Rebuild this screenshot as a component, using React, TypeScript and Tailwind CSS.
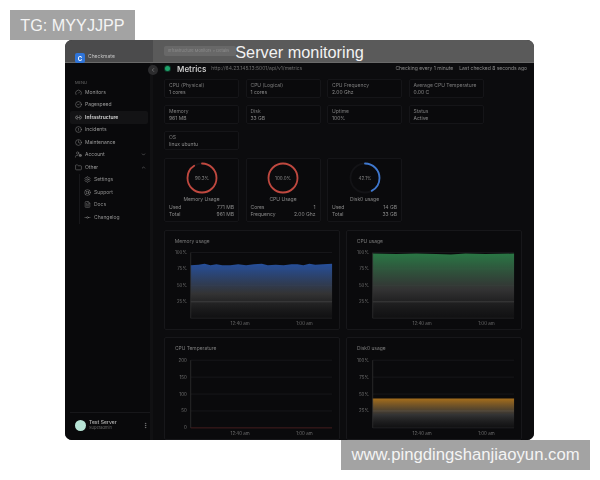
import React from 'react';
import {
  Gauge,
  CircleCheck,
  Link2,
  CircleAlert,
  Clock,
  UserCog,
  Folder,
  Settings,
  LifeBuoy,
  FileText,
  GitCommitHorizontal,
  ChevronDown,
  ChevronUp,
  ChevronLeft,
  MoreVertical,
} from 'lucide-react';

const navItems = [
  { label: 'Monitors', icon: Gauge },
  { label: 'Pagespeed', icon: CircleCheck },
  { label: 'Infrastructure', icon: Link2, active: true },
  { label: 'Incidents', icon: CircleAlert },
  { label: 'Maintenance', icon: Clock },
  { label: 'Account', icon: UserCog, chevron: 'down' },
  { label: 'Other', icon: Folder, chevron: 'up' },
];

const subItems = [
  { label: 'Settings', icon: Settings },
  { label: 'Support', icon: LifeBuoy },
  { label: 'Docs', icon: FileText },
  { label: 'Changelog', icon: GitCommitHorizontal },
];

const stats = [
  ['CPU (Physical)', '1 cores'],
  ['CPU (Logical)', '1 cores'],
  ['CPU Frequency', '2.00 Ghz'],
  ['Average CPU Temperature', '0.00 C'],
  ['Memory', '961 MB'],
  ['Disk', '33 GB'],
  ['Uptime', '100%'],
  ['Status', 'Active'],
  ['OS', 'linux ubuntu'],
];

const gauges = [
  { pct: 90.3, label: '90.3%', title: 'Memory Usage', color: '#c0483f', rows: [['Used', '771 MB'], ['Total', '961 MB']] },
  { pct: 100, label: '100.0%', title: 'CPU Usage', color: '#c0483f', rows: [['Cores', '1'], ['Frequency', '2.00 Ghz']] },
  { pct: 42.1, label: '42.1%', title: 'Disk0 usage', color: '#3f78cf', rows: [['Used', '14 GB'], ['Total', '33 GB']] },
];

const percentTicks = ['100%', '75%', '50%', '25%'];
const tempTicks = ['200', '150', '100', '50', '0'];

function Ring({ pct, label, color }: { pct: number; label: string; color: string }) {
  const r = 14.5;
  const c = 2 * Math.PI * r;
  return (
    <svg width="34" height="34" viewBox="0 0 34 34">
      <circle cx="17" cy="17" r={r} fill="none" stroke="#131316" strokeWidth="1.8" />
      <circle
        cx="17"
        cy="17"
        r={r}
        fill="none"
        stroke={color}
        strokeWidth="1.8"
        strokeLinecap="round"
        strokeDasharray={`${(c * pct) / 100} ${c}`}
        transform="rotate(-90 17 17)"
      />
      <text x="17" y="18.8" textAnchor="middle" fontSize="4.5" fill="#8a8a8a">
        {label}
      </text>
    </svg>
  );
}

// area chart drawn on the card's own coordinates
function Chart({
  id,
  title,
  ticks,
  color,
  line,
  fillTop,
}: {
  id: string;
  title: string;
  ticks: string[];
  color?: string;
  line?: string;
  fillTop?: number;
}) {
  const left = 26;
  const right = 169;
  const top = 22;
  const bottom = 89;
  const step = (bottom - top) / 4;
  return (
    <div className="border border-[#17171a] bg-[#0a0a0c] rounded-[2px] h-full">
      <svg width="100%" height="100%" viewBox="0 0 176 100" preserveAspectRatio="none">
        <defs>
          <linearGradient id={id} x1="0" y1="0" x2="0" y2="1">
            <stop offset="0" stopColor={color} stopOpacity="0.85" />
            <stop offset="0.55" stopColor="#454545" stopOpacity="0.7" />
            <stop offset="1" stopColor="#2a2a2a" stopOpacity="0.2" />
          </linearGradient>
        </defs>
        <text x="10" y="12" fontSize="5" fill="#7d7d7d">
          {title}
        </text>
        {[0, 1, 2, 3].map((i) => (
          <line key={i} x1={left} x2={right} y1={top + i * step} y2={top + i * step} stroke="#202024" strokeWidth="0.6" />
        ))}
        {color && fillTop !== undefined && (
          <path d={line ?? `M${left} ${fillTop}H${right}V${bottom}H${left}Z`} fill={`url(#${id})`} />
        )}
        {color && fillTop !== undefined && (
          <line x1={left} x2={right} y1={top + 3 * step} y2={top + 3 * step} stroke="#6a6a6a" strokeWidth="0.5" opacity="0.6" />
        )}
        <line x1={left} x2={left} y1={top} y2={bottom} stroke="#3c3c3c" strokeWidth="0.6" />
        <line x1={left} x2={right} y1={bottom} y2={bottom} stroke={ticks.length === 5 ? '#6b2a2a' : '#2a2a2e'} strokeWidth="0.6" />
        {ticks.map((t, i) => (
          <text key={t} x={left - 4} y={top + i * step + 1.5} textAnchor="end" fontSize="4.5" fill="#6f6f6f">
            {t}
          </text>
        ))}
        <text x="76" y="96" textAnchor="middle" fontSize="4.5" fill="#6f6f6f">
          12:40 am
        </text>
        <text x="141" y="96" textAnchor="middle" fontSize="4.5" fill="#6f6f6f">
          1:00 am
        </text>
      </svg>
    </div>
  );
}

const memoryPath =
  'M26 35L34 34.5L40 33.5L46 35L52 34L58 35L66 35L74 34L82 35L90 34L98 33.5L104 35L112 34.5L120 35L128 34L134 34L140 35L146 33.5L152 34.5L160 34L169 33.5V89H26Z';
const cpuPath = 'M26 23L50 23.5L70 23L90 23.5L105 24L120 23L140 23.5L169 23V89H26Z';

export default function App() {
  return (
    <div className="relative w-[600px] h-[480px] bg-white pt-10 pl-[65px] overflow-hidden font-['Inter',sans-serif]">
      <div className="relative w-[469px] h-[400px] rounded-[7px] overflow-hidden bg-[#0b0b0d] flex flex-col">
        {/* top bar */}
        <div className="h-[23px] shrink-0 flex bg-[#5a5a5a] border-b border-[#6a6a6a] blur-[0.4px]">
          <div className="w-[88px] flex items-end pl-[10px] gap-[3px] bg-[#4b4b4c]">
            <div className="w-[10px] h-[10px] mb-[-1px] rounded-[2px] bg-[#2f74d8] text-white text-[6px] font-bold flex items-center justify-center">
              C
            </div>
            <span className="text-[5px] text-[#c4c4c4] mb-[2px]">Checkmate</span>
          </div>
          <div className="ml-[11px] mt-[6px] w-[72px] h-[10px] rounded-[2px] bg-[#686868] flex items-center px-[4px] text-[4px] text-[#8d8d8d] whitespace-nowrap overflow-hidden">
            Infrastructure Monitors &gt; Details
          </div>
        </div>

        <div className="flex-1 flex min-h-0 blur-[0.4px]">
          {/* sidebar */}
          <aside className="w-[88px] shrink-0 bg-[#09090b] border-r-[3px] border-[#111113] flex flex-col pl-[5px]">
            <div className="text-[4px] text-[#6b6b6b] mt-[17px] pl-[5px]">MENU</div>
            <nav className="flex flex-col pr-[2px]">
              {navItems.map(({ label, icon: Icon, active, chevron }) => (
                <div
                  key={label}
                  className={`h-[12.5px] flex items-center gap-[3px] pl-[5px] pr-[2px] rounded-[2px] ${active ? 'bg-[#131315] text-[#d6d6d6] font-semibold' : 'text-[#9a9a9a]'}`}
                >
                  <Icon size={7} strokeWidth={1.5} />
                  <span className="text-[5px] flex-1">{label}</span>
                  {chevron === 'down' && <ChevronDown size={5} />}
                  {chevron === 'up' && <ChevronUp size={5} />}
                </div>
              ))}
            </nav>
            <div className="flex flex-col ml-[9px] border-l border-[#17171a] pl-[4px]">
              {subItems.map(({ label, icon: Icon }) => (
                <div key={label} className="h-[12.5px] flex items-center gap-[3px] text-[#8f8f8f]">
                  <Icon size={7} strokeWidth={1.5} />
                  <span className="text-[5px]">{label}</span>
                </div>
              ))}
            </div>
            <div className="mt-auto mb-[3px] h-[25px] border-t border-[#17171a] flex items-center pl-[5px] pr-[1px] gap-[3px]">
              <div className="w-[11px] h-[11px] rounded-full bg-[#b7e4d6]" />
              <div className="flex-1 leading-[6px]">
                <div className="text-[5px] text-[#a8a8a8] font-semibold">Test Server</div>
                <div className="text-[4px] text-[#686868]">Superadmin</div>
              </div>
              <MoreVertical size={7} className="text-[#8a8a8a]" />
            </div>
          </aside>

          {/* main */}
          <main className="flex-1 min-w-0 pl-[11px] pr-[7px] bg-[#0c0c0e]">
            <div className="h-[11px] flex items-center text-[#8b8b8b] text-[5px] whitespace-nowrap">
              <span className="w-[5px] h-[5px] rounded-full bg-[#1fa36b] ml-[1px] mr-[7px] ring-1 ring-[#0f3a2a]" />
              <span className="text-[8px] font-semibold text-[#c9c9c9] mr-[5px]">Metrics</span>
              <span className="text-[#6d6d6d]">http://64.23.145.13:5001/api/v1/metrics</span>
              <span className="ml-auto">Checking every 1 minute</span>
              <span className="ml-[6px]">Last checked 8 seconds ago</span>
            </div>

            <div className="grid grid-cols-[75px_75px_75px_75px] gap-x-[6.5px] gap-y-[7px] mt-[5px]">
              {stats.map(([name, value]) => (
                <div key={name} className="h-[19px] bg-[#0a0a0c] border border-[#151518] rounded-[2px] px-[4px] py-[2px] leading-[7px] text-[5px] text-[#7c7c7c]">
                  <div>{name}</div>
                  <div className="text-[#8a8a8a]">{value}</div>
                </div>
              ))}
            </div>

            <div className="grid grid-cols-[75px_75px_75px] gap-x-[6.5px] mt-[8px]">
              {gauges.map((g) => (
                <div key={g.title} className="h-[64px] bg-[#0a0a0c] border border-[#151518] rounded-[2px] px-[4px] flex flex-col items-center pt-[2px]">
                  <Ring pct={g.pct} label={g.label} color={g.color} />
                  <div className="text-[5px] text-[#8a8a8a] mt-[1px] leading-[7px]">{g.title}</div>
                  <div className="w-full leading-[7px] text-[5px] text-[#8a8a8a] mt-[1px]">
                    {g.rows.map(([k, v]) => (
                      <div key={k} className="flex justify-between">
                        <span>{k}</span>
                        <span>{v}</span>
                      </div>
                    ))}
                  </div>
                </div>
              ))}
            </div>

            <div className="grid grid-cols-[176px_176px] gap-x-[6px] gap-y-[7px] grid-rows-[100px_103px] mt-[8px]">
              <Chart id="mem" title="Memory usage" ticks={percentTicks} color="#2a5bb5" line={memoryPath} fillTop={35} />
              <Chart id="cpu" title="CPU usage" ticks={percentTicks} color="#2f8a4e" line={cpuPath} fillTop={23} />
              <Chart id="temp" title="CPU Temperature" ticks={tempTicks} />
              <Chart id="disk" title="Disk0 usage" ticks={percentTicks} color="#c07f1e" fillTop={60} />
            </div>
          </main>
        </div>

        {/* collapse button and title sit over the panel */}
        <div className="absolute left-[83px] top-[25px] w-[10px] h-[10px] rounded-full bg-[#2c2c2e] text-[#a0a0a0] flex items-center justify-center">
          <ChevronLeft size={6} />
        </div>
        <div className="absolute left-0 right-0 top-[3px] text-center text-[16.3px] leading-[19px] text-[#f2f2f2] font-['Liberation_Sans',sans-serif]">
          Server monitoring
        </div>
      </div>

      {/* watermarks */}
      <div className="absolute left-[10px] top-[10px] w-[125px] h-[30px] bg-[#a3a3a3] text-[#f4f4f4] text-[16.2px] flex items-center justify-center font-['Liberation_Sans',sans-serif]">
        TG: MYYJJPP
      </div>
      <div className="absolute left-[341px] top-[440px] w-[249px] h-[30px] bg-[#a3a3a3] text-[#f4f4f4] text-[16.7px] flex items-center justify-center font-['Liberation_Sans',sans-serif]">
        www.pingdingshanjiaoyun.com
      </div>
    </div>
  );
}
